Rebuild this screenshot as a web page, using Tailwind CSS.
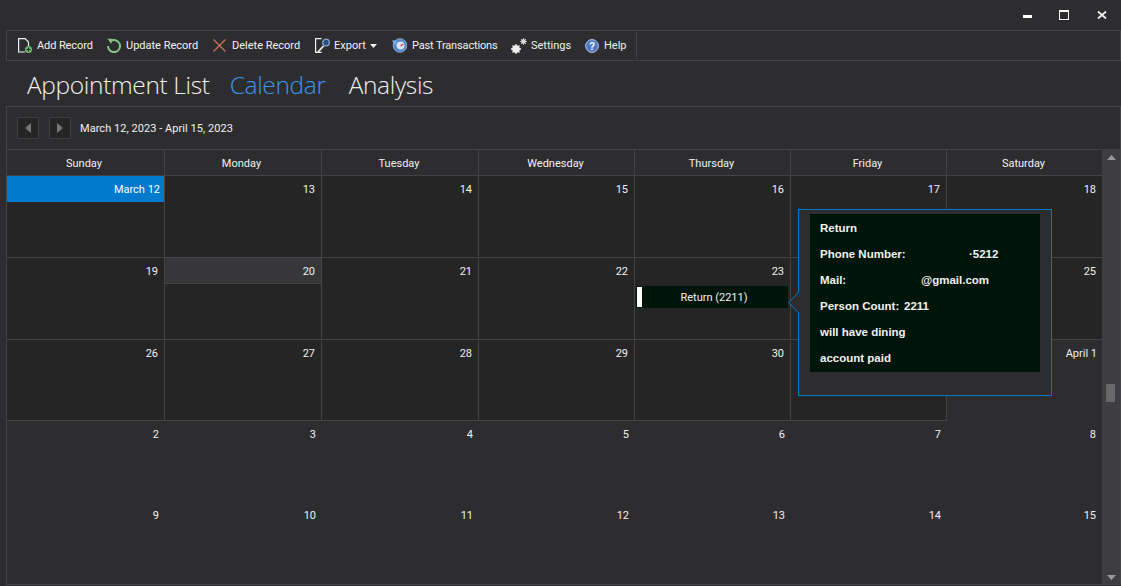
<!DOCTYPE html>
<html>
<head>
<meta charset="utf-8">
<script src="https://cdn.jsdelivr.net/npm/@tailwindcss/browser@4"></script>
</head>
<body class="w-[1121px] h-[586px] overflow-hidden bg-[#2d2d30] text-[#f1f1f1] font-['Roboto',sans-serif] text-[11px] leading-[15px] flex flex-col">
  <!-- title bar -->
  <div class="h-[30px] flex justify-end items-start pr-[14px] shrink-0">
    <div class="w-[9px] h-[3px] bg-white mt-[15px]"></div>
    <div class="w-[10px] h-[10px] border border-white border-t-2 mt-[10px] ml-[27px]"></div>
    <svg class="w-[10px] h-[8px] mt-[11px] ml-[28px]" viewBox="0 0 10 8"><path d="M1 .5l8 7M9 .5l-8 7" stroke="#f1f1f1" stroke-width="1.800"/></svg>
  </div>
  <!-- toolbar -->
  <div class="ml-[6px] h-[31px] border border-[#434346] flex items-center pl-[11px] shrink-0">
    <div class="w-[89px] flex items-center gap-[5px]">
      <svg class="w-[14px] h-[15px] shrink-0" viewBox="0 0 14 15" fill="none"><path d="M7 14H.6V.6h6.500l3.400 3.400v4" stroke="#f1f1f1" stroke-width="1.200"/><circle cx="10.500" cy="11.500" r="3.500" fill="#6fb56f"/><path d="M8.500 11.500h4M10.500 9.500v4" stroke="#14301a" stroke-width="1"/></svg>
      <span class="tracking-[-0.1px]">Add Record</span>
    </div>
    <div class="w-[106px] flex items-center gap-[5px]">
      <svg class="w-[14px] h-[15px] shrink-0" viewBox="0 0 14 15" fill="none"><path d="M3.500 3.200A6 6 0 1 1 1 8" stroke="#86c186" stroke-width="2"/><path d="M.5.500l5.500.5-2 5z" fill="#86c186"/></svg>
      <span>Update Record</span>
    </div>
    <div class="w-[102px] flex items-center gap-[6px]">
      <svg class="w-[13px] h-[13px] shrink-0" viewBox="0 0 13 13" fill="none"><path d="M.5.500l12 12M12.500.500l-12 12" stroke="#c8705f" stroke-width="1.400"/></svg>
      <span>Delete Record</span>
    </div>
    <div class="w-[77px] flex items-center gap-[4px]">
      <svg class="w-[15px] h-[15px] shrink-0" viewBox="0 0 15 15" fill="none"><path d="M6 .6H.6v13.800h6M.6.600h6" stroke="#f1f1f1" stroke-width="1.200"/><path d="M3 14l5.500-6" stroke="#f1f1f1" stroke-width="1.800"/><circle cx="11" cy="4.500" r="3.300" fill="#2d4a70" stroke="#7fa9dc" stroke-width="1.300"/></svg>
      <span>Export</span>
      <svg class="w-[7px] h-[4px] shrink-0" viewBox="0 0 7 4"><path d="M0 0h7L3.500 4z" fill="#f1f1f1"/></svg>
    </div>
    <div class="w-[119px] flex items-center gap-[5px]">
      <svg class="w-[15px] h-[15px] shrink-0" viewBox="0 0 15 15" fill="none"><circle cx="8" cy="7.500" r="6.800" fill="#4f86c8" stroke="#9cc2ec" stroke-width=".8"/><circle cx="8.500" cy="7.500" r="4" fill="#d6e4f4"/><path d="M8.500 8l3-2" stroke="#c84040" stroke-width="1.300"/><path d="M0 2.500l5 0-2 5z" fill="#7fb0e4"/></svg>
      <span class="tracking-[-0.15px]">Past Transactions</span>
    </div>
    <div class="w-[74px] flex items-center gap-[4px]">
      <svg class="w-[16px] h-[16px] shrink-0" viewBox="0 0 16 16" fill="none"><circle cx="5" cy="11" r="2.800" stroke="#f1f1f1" stroke-width="2"/><path d="M5 6v10M0 11h10M1.500 7.500l7 7M8.500 7.500l-7 7" stroke="#f1f1f1" stroke-width="1.300"/><circle cx="12.500" cy="3.500" r="1.800" stroke="#f1f1f1" stroke-width="1.100"/><path d="M12.500 0v7M9 3.500h7M10 1l5 5M15 1l-5 5" stroke="#f1f1f1" stroke-width=".7"/></svg>
      <span>Settings</span>
    </div>
    <div class="w-[51px] flex items-center gap-[5px]">
      <svg class="w-[14px] h-[14px] shrink-0" viewBox="0 0 14 14"><circle cx="7" cy="7" r="6.400" fill="#4f78c8" stroke="#b4c8ec" stroke-width="1"/><text x="7" y="10.500" text-anchor="middle" font-size="10" font-weight="700" fill="#fff" font-family="Liberation Sans">?</text></svg>
      <span>Help</span>
    </div>
    <div class="w-px h-[27px] bg-[#434346]"></div>
  </div>
  <!-- tabs -->
  <div class="h-[45px] pl-[27px] pt-[3px] flex items-center text-[24.500px] leading-[34px] font-light font-['Open_Sans',sans-serif] shrink-0 tracking-[-0.35px]">
    <span>Appointment List</span>
    <span class="ml-[20px] text-[#3b94f0]">Calendar</span>
    <span class="ml-[23px]">Analysis</span>
  </div>
  <!-- calendar panel -->
  <div class="relative ml-[6px] h-[479px] border border-[#434346] flex flex-col shrink-0">
    <div class="h-[42px] flex items-center pl-[10px] shrink-0">
      <button class="w-[22px] h-[22px] bg-[#252526] border border-[#3f3f42] flex items-center justify-center">
        <svg class="w-[6px] h-[10px]" viewBox="0 0 6 10"><path d="M6 0v10L0 5z" fill="#777"/></svg>
      </button>
      <button class="w-[22px] h-[22px] ml-[10px] bg-[#252526] border border-[#3f3f42] flex items-center justify-center">
        <svg class="w-[6px] h-[10px]" viewBox="0 0 6 10"><path d="M0 0v10l6-5z" fill="#777"/></svg>
      </button>
      <span class="ml-[9px] tracking-[0.05px]">March 12, 2023 - April 15, 2023</span>
    </div>
    <div class="flex flex-1 min-h-0">
      <div class="w-[1095px] shrink-0 flex flex-col">
        <!-- header -->
        <div class="grid grid-cols-[158px_157px_157px_156px_156px_156px_155px] h-[27px] border-t border-b border-[#434346] shrink-0">
          <div class="flex items-center justify-center pr-[3px] pt-[2px] border-r border-[#434346]">Sunday</div>
          <div class="flex items-center justify-center pr-[3px] pt-[2px] border-r border-[#434346]">Monday</div>
          <div class="flex items-center justify-center pr-[2px] pt-[2px] border-r border-[#434346]">Tuesday</div>
          <div class="flex items-center justify-center pr-[2px] pt-[2px] border-r border-[#434346]">Wednesday</div>
          <div class="flex items-center justify-center pr-[2px] pt-[2px] border-r border-[#434346]">Thursday</div>
          <div class="flex items-center justify-center pr-[2px] pt-[2px] border-r border-[#434346]">Friday</div>
          <div class="flex items-center justify-center pr-[2px] pt-[2px]">Saturday</div>
        </div>
        <!-- week 1 -->
        <div class="grid grid-cols-[158px_157px_157px_156px_156px_156px_155px] h-[82px] bg-[#252526] border-b border-[#434346] shrink-0">
          <div class="border-r border-[#434346]"><div class="h-[26px] bg-[#007acc] text-right pr-[4px] pt-[6px] text-white">March 12</div></div>
          <div class="border-r border-[#434346] text-right pr-[6px] pt-[6px]">13</div>
          <div class="border-r border-[#434346] text-right pr-[6px] pt-[6px]">14</div>
          <div class="border-r border-[#434346] text-right pr-[6px] pt-[6px]">15</div>
          <div class="border-r border-[#434346] text-right pr-[6px] pt-[6px]">16</div>
          <div class="border-r border-[#434346] text-right pr-[6px] pt-[6px]">17</div>
          <div class="text-right pr-[6px] pt-[6px]">18</div>
        </div>
        <!-- week 2 -->
        <div class="grid grid-cols-[158px_157px_157px_156px_156px_156px_155px] h-[82px] bg-[#252526] border-b border-[#434346] shrink-0">
          <div class="border-r border-[#434346] text-right pr-[6px] pt-[6px]">19</div>
          <div class="border-r border-[#434346]"><div class="h-[26px] bg-[#37373a] border-b border-[#434346] text-right pr-[6px] pt-[6px]">20</div></div>
          <div class="border-r border-[#434346] text-right pr-[6px] pt-[6px]">21</div>
          <div class="border-r border-[#434346] text-right pr-[6px] pt-[6px]">22</div>
          <div class="border-r border-[#434346] flex flex-col">
            <div class="text-right pr-[6px] pt-[6px] h-[28px]">23</div>
            <div class="ml-[1px] mr-[2px] h-[22px] bg-[#00150a] flex items-center relative pl-[4px]">
              <div class="absolute left-[1px] top-[1px] w-[5px] h-[20px] bg-white"></div>
              <span class="flex-1 text-center">Return (2211)</span>
            </div>
          </div>
          <div class="border-r border-[#434346]"></div>
          <div class="text-right pr-[6px] pt-[6px]">25</div>
        </div>
        <!-- week 3 -->
        <div class="grid grid-cols-[158px_157px_157px_156px_156px_156px_155px] h-[81px] shrink-0">
          <div class="bg-[#252526] border-r border-b border-[#434346] text-right pr-[6px] pt-[6px]">26</div>
          <div class="bg-[#252526] border-r border-b border-[#434346] text-right pr-[6px] pt-[6px]">27</div>
          <div class="bg-[#252526] border-r border-b border-[#434346] text-right pr-[6px] pt-[6px]">28</div>
          <div class="bg-[#252526] border-r border-b border-[#434346] text-right pr-[6px] pt-[6px]">29</div>
          <div class="bg-[#252526] border-r border-b border-[#434346] text-right pr-[6px] pt-[6px]">30</div>
          <div class="bg-[#252526] border-r border-b border-[#434346]"></div>
          <div class="text-right pr-[5px] pt-[6px]">April 1</div>
        </div>
        <!-- week 4 -->
        <div class="grid grid-cols-[158px_157px_157px_156px_156px_156px_155px] h-[81px] shrink-0">
          <div class="text-right pr-[6px] pt-[6px]">2</div>
          <div class="text-right pr-[6px] pt-[6px]">3</div>
          <div class="text-right pr-[6px] pt-[6px]">4</div>
          <div class="text-right pr-[6px] pt-[6px]">5</div>
          <div class="text-right pr-[6px] pt-[6px]">6</div>
          <div class="text-right pr-[6px] pt-[6px]">7</div>
          <div class="text-right pr-[6px] pt-[6px]">8</div>
        </div>
        <!-- week 5 -->
        <div class="grid grid-cols-[158px_157px_157px_156px_156px_156px_155px] flex-1">
          <div class="text-right pr-[6px] pt-[6px]">9</div>
          <div class="text-right pr-[6px] pt-[6px]">10</div>
          <div class="text-right pr-[6px] pt-[6px]">11</div>
          <div class="text-right pr-[6px] pt-[6px]">12</div>
          <div class="text-right pr-[6px] pt-[6px]">13</div>
          <div class="text-right pr-[6px] pt-[6px]">14</div>
          <div class="text-right pr-[6px] pt-[6px]">15</div>
        </div>
      </div>
      <!-- scrollbar -->
      <div class="flex-1 bg-[#3e3e42] relative flex flex-col items-center justify-between pt-[6px] pb-[4px]">
        <svg class="w-[9px] h-[5px]" viewBox="0 0 9 5"><path d="M4.500 0L9 5H0z" fill="#999"/></svg>
        <div class="absolute top-[235px] left-[4px] w-[9px] h-[18px] bg-[#686868]"></div>
        <svg class="w-[9px] h-[5px]" viewBox="0 0 9 5"><path d="M0 0h9L4.500 5z" fill="#999"/></svg>
      </div>
    </div>
    <!-- popup -->
    <div class="absolute left-[791px] top-[102px] w-[254px] h-[187px] bg-[#2d2d30] border border-[#007acc] pl-[11px] pt-[4px]">
      <div class="w-[230px] h-[158px] bg-[#00150a] pl-[10px] pt-[1px] font-bold text-[11.500px] leading-[26px] font-['Liberation_Sans',sans-serif] whitespace-nowrap">
        <div>Return</div>
        <div class="flex"><span class="w-[149px]">Phone Number:</span><span>·5212</span></div>
        <div class="flex"><span class="w-[101px]">Mail:</span><span>@gmail.com</span></div>
        <div class="flex"><span class="w-[84px]">Person Count:</span><span>2211</span></div>
        <div>will have dining</div>
        <div>account paid</div>
      </div>
    </div>
    <svg class="absolute left-[781px] top-[185px] w-[11px] h-[21px]" viewBox="0 0 11 21" fill="none"><path d="M11 0L.7 10.500 11 21z" fill="#2d2d30"/><path d="M10.500 0L.7 10.500 10.500 21" stroke="#007acc"/></svg>
  </div>
</body>
</html>
